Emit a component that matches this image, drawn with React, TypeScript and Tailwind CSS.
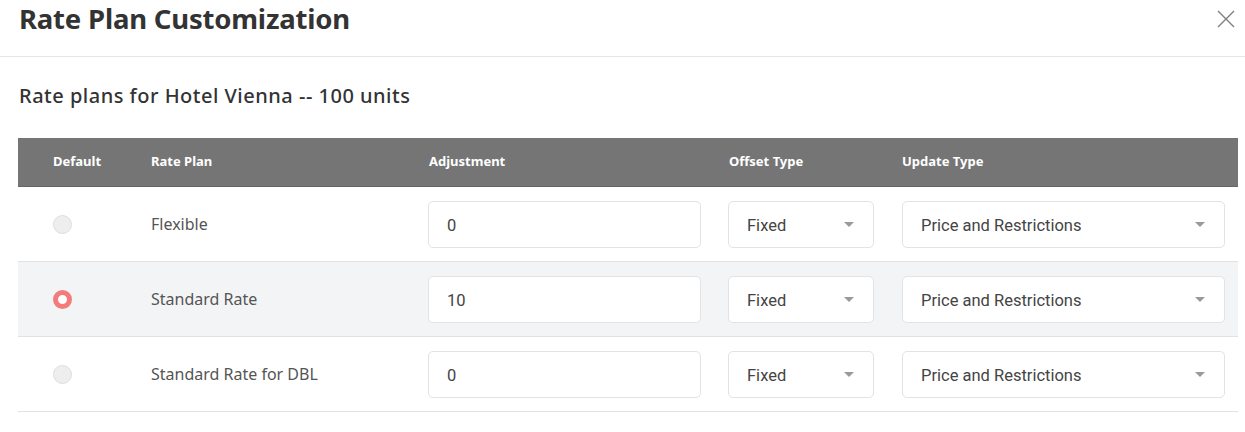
const rows = [
    { name: 'Flexible', adj: '0', checked: false },
    { name: 'Standard Rate', adj: '10', checked: true },
    { name: 'Standard Rate for DBL', adj: '0', checked: false },
]

const cols = 'grid grid-cols-[98px_278px_300px_173px_1fr] pl-[35px] pr-[13px]'

function Caret() {
    return <span className="w-0 h-0 border-l-[5px] border-r-[5px] border-t-[5px] border-l-transparent border-r-transparent border-t-[#9a9a9a]" />
}

function Select({ value, className }: { value: string; className: string }) {
    return (
        <div className={`h-[47px] flex items-center justify-between bg-white border border-[#e3e3e3] rounded-[5px] pl-[18px] pr-[19px] ${className}`}>
            <span className="pt-[3px] text-[16.5px] text-[#444] font-['Roboto',sans-serif]">{value}</span>
            <Caret />
        </div>
    )
}

export default function App() {
    return (
        <div className="w-[1245px] h-[432px] bg-white font-['Noto_Sans',sans-serif] text-[#333]">
            {/* Header */}
            <div className="h-[57px] flex items-start justify-between pl-[19px] pr-[10px] border-b border-[#e6e6e6]">
                <h2 className="text-[27.5px] leading-[36px] font-bold text-[#333] tracking-[-0.2px] mt-[1px]">Rate Plan Customization</h2>
                <button className="w-[18px] h-[18px] mt-[10px] text-[#808080]">
                    <svg viewBox="0 0 18 18" className="w-[18px] h-[18px]" fill="none" stroke="currentColor" strokeWidth={1.4}>
                        <path d="M1 1L17 17M17 1L1 17" />
                    </svg>
                </button>
            </div>

            <div className="pl-[18px] pr-[7px]">
                <h3 className="text-[20px] font-medium tracking-[0.5px] text-[#333] pl-px pt-[25px] pb-[28px] leading-[28px]">Rate plans for Hotel Vienna -- 100 units</h3>

                <div className="w-[1220px]">
                    <div className={`${cols} h-[49px] items-center bg-[#757575] border-b border-[#666] text-white text-[13px] font-bold`}>
                        <div>Default</div>
                        <div>Rate Plan</div>
                        <div>Adjustment</div>
                        <div>Offset Type</div>
                        <div>Update Type</div>
                    </div>

                    {rows.map((r, i) => (
                        <div key={r.name} className={`${cols} h-[75px] items-center border-b border-[#e2e2e2] ${i === 1 ? 'bg-[#f3f4f6]' : 'bg-white'}`}>
                            <div>
                                {r.checked ? (
                                    <span className="block w-[19px] h-[19px] rounded-full border-[5px] border-[#f47b7b] bg-white" />
                                ) : (
                                    <span className="block w-[19px] h-[19px] rounded-full border border-[#dedede] bg-[#eeeeee]" />
                                )}
                            </div>
                            <div className="text-[16px] text-[#555]">{r.name}</div>
                            <div className="-ml-[1px] mt-[1px]">
                                <div className="w-[273px] h-[47px] flex items-center bg-white border border-[#e3e3e3] rounded-[5px] pl-[18px] pt-[3px] text-[16.5px] text-[#444] font-['Roboto',sans-serif]">{r.adj}</div>
                            </div>
                            <div className="-ml-[1px] mt-[1px]">
                                <Select value="Fixed" className="w-[146px]" />
                            </div>
                            <div className="mt-[1px]">
                                <Select value="Price and Restrictions" className="w-full" />
                            </div>
                        </div>
                    ))}
                </div>
            </div>
        </div>
    )
}
